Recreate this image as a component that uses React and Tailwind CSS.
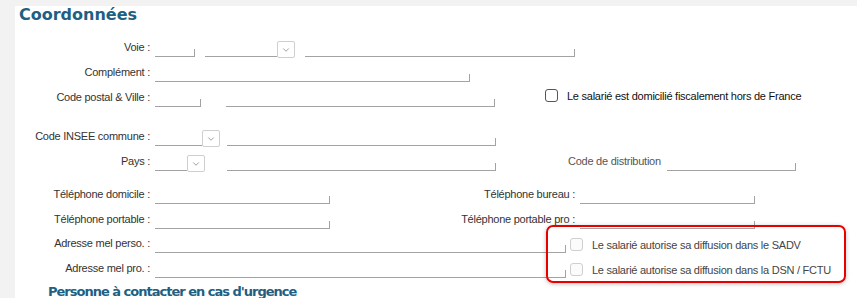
import { ChevronDown } from 'lucide-react';

function Line({ w }) {
  return <div className="h-[8px] border-b border-r border-[#a3a3a3]" style={{ width: w }} />;
}

function Combo({ w }) {
  return (
    <div className="flex items-end">
      <div className="h-[8px] border-b border-[#a3a3a3]" style={{ width: w }} />
      <div className="w-[18px] h-[17px] -mb-px border border-[#cfcfcf] rounded-[2px] flex items-center justify-center bg-white">
        <ChevronDown className="w-[10px] h-[10px] text-[#666]" strokeWidth={1.5} />
      </div>
    </div>
  );
}

function Label({ children, w = 'w-[140px]' }) {
  return <div className={`${w} shrink-0 mb-[4px] text-right pr-[5px] leading-none whitespace-nowrap`}>{children}</div>;
}

function Check({ label, faded }) {
  return (
    <div className="flex items-center gap-[9px] whitespace-nowrap">
      <div
        className={`w-[13px] h-[13px] shrink-0 rounded-[3px] border ${
          faded ? 'border-[#cfcfcf] bg-[#fbfbfb]' : 'border-[#555] bg-white'
        }`}
      />
      <span className={faded ? 'text-[#444]' : 'text-[#111]'}>{label}</span>
    </div>
  );
}

const heading = { fontFamily: '"DejaVu Sans", Verdana, sans-serif' };

export default function App() {
  return (
    <div
      className="w-[857px] h-[298px] overflow-hidden bg-[#f2f2f2] pl-[15px] pt-[6px] text-[11px] tracking-[-0.25px] text-[#333]"
      style={{ fontFamily: '"Liberation Sans", Arial, sans-serif' }}
    >
      <div className="relative bg-white h-full">
        <h2 className="pl-[4px] text-[16px] font-bold text-[#1e5f82] leading-[18px] tracking-normal" style={heading}>
          Coordonnées
        </h2>

        <div className="pt-[10px]">
          {/* Voie */}
          <div className="flex items-end h-[25px] pb-[2px]">
            <Label>Voie :</Label>
            <Line w={40} />
            <div className="ml-[10px]"><Combo w={72} /></div>
            <div className="ml-[10px]"><Line w={270} /></div>
          </div>
          {/* Complément */}
          <div className="flex items-end h-[25px] pb-[2px]">
            <Label>Complément :</Label>
            <Line w={315} />
          </div>
          {/* Code postal */}
          <div className="flex items-end h-[25px] pb-[2px]">
            <Label>Code postal &amp; Ville :</Label>
            <Line w={46} />
            <div className="ml-[25px]"><Line w={269} /></div>
            <div className="ml-[50px] mb-[3px]">
              <Check label="Le salarié est domicilié fiscalement hors de France" />
            </div>
          </div>

          {/* INSEE */}
          <div className="flex items-end h-[25px] pb-[2px] mt-[14px]">
            <Label>Code INSEE commune :</Label>
            <Combo w={47} />
            <div className="ml-[7px]"><Line w={269} /></div>
          </div>
          {/* Pays */}
          <div className="flex items-end h-[25px] pb-[2px]">
            <Label>Pays :</Label>
            <Combo w={32} />
            <div className="ml-[22px]"><Line w={269} /></div>
            <div className="ml-[72px] mb-[4px] w-[99px] text-[#555] leading-none whitespace-nowrap">Code de distribution</div>
            <Line w={129} />
          </div>

          {/* Téléphones */}
          <div className="flex items-end h-[25px] pb-[2px] mt-[8px]">
            <Label>Téléphone domicile :</Label>
            <Line w={175} />
            <Label w="w-[250px]">Téléphone bureau :</Label>
            <Line w={175} />
          </div>
          <div className="flex items-end h-[25px] pb-[2px]">
            <Label>Téléphone portable :</Label>
            <Line w={175} />
            <Label w="w-[250px]">Téléphone portable pro :</Label>
            <Line w={175} />
          </div>

          {/* Mails */}
          <div className="flex items-end h-[24px] pb-[2px]">
            <Label>Adresse mel perso. :</Label>
            <Line w={411} />
            <div className="ml-[4px]">
              <Check faded label="Le salarié autorise sa diffusion dans le SADV" />
            </div>
          </div>
          <div className="flex items-end h-[25px] pb-[2px]">
            <Label>Adresse mel pro. :</Label>
            <Line w={411} />
            <div className="ml-[4px]">
              <Check faded label="Le salarié autorise sa diffusion dans la DSN / FCTU" />
            </div>
          </div>

          <h3
            className="pl-[33px] pt-[5px] text-[13px] font-bold text-[#1e5f82] leading-none tracking-[-1px] whitespace-nowrap"
            style={heading}
          >
            Personne à contacter en cas d'urgence
          </h3>
        </div>

        {/* highlight */}
        <div className="absolute left-[531px] top-[219px] w-[300px] h-[58px] border-2 border-[#e60000] rounded-[7px] shadow-[0_1px_4px_rgba(0,0,0,0.25)] pointer-events-none" />
      </div>
    </div>
  );
}
